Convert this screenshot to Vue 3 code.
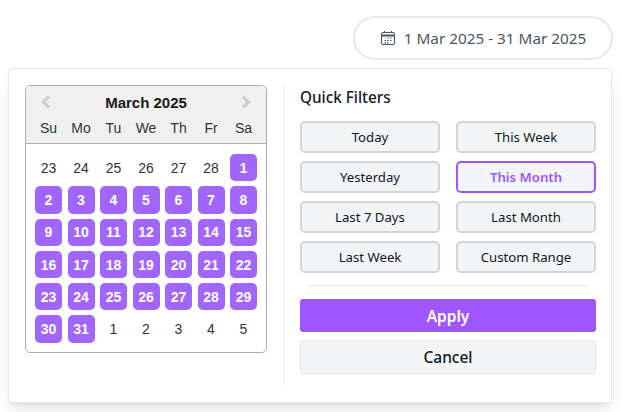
<script setup>
const weekdays = ['Su', 'Mo', 'Tu', 'We', 'Th', 'Fr', 'Sa'];

// 23 Feb - 5 Apr, March is the selected range
const days = [];
for (let d = 23; d <= 28; d++) days.push({ n: d, on: false });
for (let d = 1; d <= 31; d++) days.push({ n: d, on: true });
for (let d = 1; d <= 5; d++) days.push({ n: d, on: false });

const filters = ['Today', 'This Week', 'Yesterday', 'This Month', 'Last 7 Days', 'Last Month', 'Last Week', 'Custom Range'];
</script>

<template>
  <div class="page">
    <div class="top">
      <button class="trigger">
        <svg class="cal-icon" width="16" height="16" viewBox="0 0 16 16" fill="none" stroke="#4b5563">
          <rect x="1.5" y="2.5" width="13" height="12" rx="1.5" />
          <path d="M1.5 5.5h13" stroke-width="2" />
          <path d="M4.5 1v2M11.5 1v2" />
          <path d="M7 8h1.5M10 8h1.5M4.5 10.5h1.5M7 10.5h1.5M10 10.5h1.5M4.5 12.8h1.5M7 12.8h1.5" stroke-width="1.2" />
        </svg>
        <span>1 Mar 2025 - 31 Mar 2025</span>
      </button>
    </div>

    <div class="card">
      <div class="calendar">
        <div class="cal-head">
          <div class="month-row">
            <svg width="12" height="14" viewBox="0 0 12 14" fill="none" stroke="#ccc" stroke-width="3"><path d="M9 1.5 3.5 7 9 12.5" /></svg>
            <span class="month">March 2025</span>
            <svg width="12" height="14" viewBox="0 0 12 14" fill="none" stroke="#ccc" stroke-width="3"><path d="M3 1.5 8.5 7 3 12.5" /></svg>
          </div>
          <div class="week">
            <span v-for="w in weekdays" :key="w">{{ w }}</span>
          </div>
        </div>
        <div class="grid">
          <span v-for="(d, i) in days" :key="i" :class="['day', { on: d.on }]">{{ d.n }}</span>
        </div>
      </div>

      <div class="side">
        <h3>Quick Filters</h3>
        <div class="filters">
          <button v-for="f in filters" :key="f" :class="['filter', { active: f === 'This Month' }]">{{ f }}</button>
        </div>
        <div class="rule"></div>
        <button class="apply">Apply</button>
        <button class="cancel">Cancel</button>
      </div>
    </div>
  </div>
</template>

<style>
html, body {
  background: #fff;
}
</style>

<style scoped>
.page {
  width: 622px;
  height: 412px;
  overflow: hidden;
  font-family: "Noto Sans", "Open Sans", sans-serif;
  color: #111827;
}

.top {
  display: flex;
  justify-content: flex-end;
  padding: 16px 9px 8px 0;
}

.trigger {
  width: 260px;
  height: 44px;
  display: flex;
  align-items: center;
  justify-content: center;
  gap: 8px;
  background: #fff;
  border: 2px solid #e5e7eb;
  border-radius: 22px;
  color: #4b5563;
  font-family: inherit;
  font-size: 15.3px;
  padding: 0;
}

.card {
  width: 604px;
  height: 335px;
  margin-left: 8px;
  box-sizing: border-box;
  display: flex;
  padding: 16px 15px 14px 16px;
  background: #fff;
  border: 1px solid #e5e7eb;
  border-radius: 4px;
  box-shadow: 0 10px 15px -3px rgba(0, 0, 0, 0.1), 0 4px 6px -4px rgba(0, 0, 0, 0.1);
}

.calendar {
  width: 242px;
  height: 268px;
  box-sizing: border-box;
  border: 1px solid #aeaeae;
  border-radius: 5px;
  overflow: hidden;
  font-family: "Liberation Sans", Arial, sans-serif;
  flex-shrink: 0;
}

.cal-head {
  height: 58px;
  box-sizing: border-box;
  background: #f0f0f0;
  border-bottom: 1px solid #aeaeae;
  padding: 8px 9px 0;
}

.month-row {
  display: flex;
  align-items: center;
  justify-content: space-between;
  height: 16px;
  padding: 0 5px;
}

.month {
  font-size: 15px;
  font-weight: 700;
  color: #1a1a1a;
}

.week {
  display: grid;
  grid-template-columns: repeat(7, 27px);
  column-gap: 5.5px;
  margin-top: 10px;
  text-align: center;
  font-size: 14px;
  color: #333;
}

.grid {
  display: grid;
  grid-template-columns: repeat(7, 27px);
  grid-auto-rows: 27.3px;
  gap: 5px 5.5px;
  padding: 10px 9px 0;
}

.day {
  display: flex;
  align-items: center;
  justify-content: center;
  font-size: 14px;
  color: #333;
  border-radius: 5px;
}

.day.on {
  background: #a066ff;
  color: #fff;
  font-weight: 700;
}

.side {
  flex: 1;
  margin-left: 16px;
  padding-left: 16px;
  border-left: 1px solid #eeeeee;
  display: flex;
  flex-direction: column;
}

h3 {
  margin: 0;
  font-size: 15.3px;
  font-weight: 500;
  line-height: 24px;
  color: #111827;
}

.filters {
  display: grid;
  grid-template-columns: 140px 140px;
  grid-auto-rows: 32px;
  gap: 8px 16px;
  margin-top: 12px;
}

button {
  box-sizing: border-box;
  font-family: inherit;
  cursor: pointer;
}

.filter {
  padding: 0;
  background: #f3f4f6;
  border: 2px solid #d1d5db;
  border-radius: 5px;
  font-size: 13.2px;
  color: #111827;
}

.filter.active {
  border-color: #a056ff;
  color: #a056ff;
  font-weight: 600;
}

.rule {
  height: 1px;
  margin: 12px 8px 13px;
  background: #e5e7eb;
}

.apply {
  width: 296px;
  height: 33px;
  padding: 0;
  background: #a056ff;
  border: none;
  border-radius: 3px;
  color: #fff;
  font-size: 15.5px;
  font-weight: 600;
}

.cancel {
  width: 296px;
  height: 34px;
  margin-top: 8px;
  padding: 0;
  background: #f3f4f6;
  border: 1px solid #e5e7eb;
  border-radius: 3px;
  color: #111827;
  font-size: 15.5px;
  font-weight: 500;
}
</style>
